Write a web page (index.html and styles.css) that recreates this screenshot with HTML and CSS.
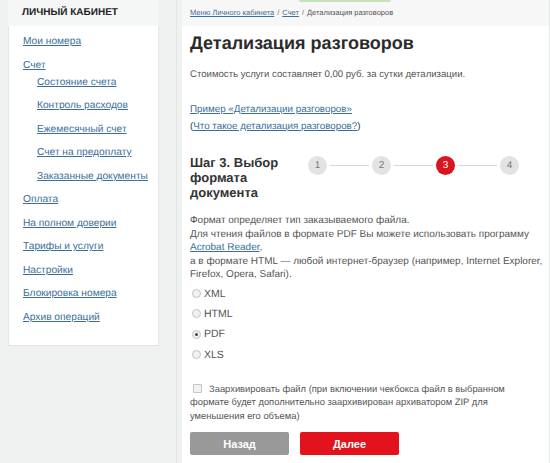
FILE: index.html
```html
<!DOCTYPE html>
<html lang="ru">
<head>
<meta charset="utf-8">
<link rel="stylesheet" href="styles.css">
</head>
<body>
<div class="page">
  <aside class="side">
    <div class="card">
      <div class="card-head">ЛИЧНЫЙ КАБИНЕТ</div>
      <ul class="menu">
        <li><a href="#">Мои номера</a></li>
        <li class="group"><a href="#">Счет</a>
          <ul class="sub">
            <li><a href="#">Состояние счета</a></li>
            <li><a href="#">Контроль расходов</a></li>
            <li><a href="#">Ежемесячный счет</a></li>
            <li><a href="#">Счет на предоплату</a></li>
            <li><a href="#">Заказанные документы</a></li>
          </ul>
        </li>
        <li><a href="#">Оплата</a></li>
        <li><a href="#">На полном доверии</a></li>
        <li><a href="#">Тарифы и услуги</a></li>
        <li><a href="#">Настройки</a></li>
        <li><a href="#">Блокировка номера</a></li>
        <li><a href="#">Архив операций</a></li>
      </ul>
    </div>
  </aside>
  <main class="main">
    <div class="crumbs">
      <span class="tab"></span>
      <a href="#">Меню Личного кабинета</a><span class="sep">/</span><a href="#">Счет</a><span class="sep">/</span><span>Детализация разговоров</span>
    </div>
    <div class="content">
      <h1 class="title">Детализация разговоров</h1>
      <p class="cost">Стоимость услуги составляет 0,00 руб. за сутки детализации.</p>
      <div class="links">
        <a href="#">Пример «Детализации разговоров»</a><br>
        (<a href="#">Что такое детализация разговоров?</a>)
      </div>
      <div class="step-row">
        <div class="step-title">Шаг 3. Выбор формата документа</div>
        <div class="steps">
          <span class="dot">1</span><span class="line"></span>
          <span class="dot">2</span><span class="line"></span>
          <span class="dot active">3</span><span class="line"></span>
          <span class="dot">4</span>
        </div>
      </div>
      <p class="desc">Формат определяет тип заказываемого файла.<br>
        Для чтения файлов в формате PDF Вы можете использовать программу<br>
        <a href="#">Acrobat Reader</a>,<br>
        а в формате HTML — любой интернет-браузер (например, Internet Explorer,<br>
        Firefox, Opera, Safari).</p>
      <div class="radios">
        <label class="radio"><span class="rb"></span>XML</label>
        <label class="radio"><span class="rb"></span>HTML</label>
        <label class="radio"><span class="rb on"></span>PDF</label>
        <label class="radio"><span class="rb"></span>XLS</label>
      </div>
      <p class="zip"><span class="cb"></span>Заархивировать файл (при включении чекбокса файл в выбранном формате будет дополнительно заархивирован архиватором ZIP для уменьшения его объема)</p>
      <div class="buttons">
        <button class="btn back">Назад</button>
        <button class="btn next">Далее</button>
      </div>
    </div>
  </main>
</div>
</body>
</html>
```
FILE: styles.css
```css
* { box-sizing: border-box; }
html, body { margin: 0; padding: 0; }
body {
  background: #f0f2f2;
  font-family: "Liberation Sans", Arial, sans-serif;
  color: #555;
  width: 550px;
  height: 463px;
  overflow: hidden;
  text-rendering: geometricPrecision;
}
a { color: #3a6f99; text-decoration: underline; }
.page { display: flex; height: 463px; }
.side {
  width: 177px;
  flex: none;
  background: #eff1f1;
  border-right: 1px solid #e3e6e6;
  padding-left: 8px;
}
.card { width: 151px; }
.card-head {
  height: 26px;
  background: #f5f6f6;
  padding: 7px 0 0 14px;
  font-size: 10px;
  font-weight: bold;
  color: #222;
}
.menu {
  list-style: none;
  margin: 0;
  padding: 9px 0 21px 14px;
  background: #fff;
  border: 1px solid #e4e6e6;
  border-top: none;
  font-size: 10.2px;
}
.menu li { line-height: 13px; margin-bottom: 10.5px; }
.menu li:last-child { margin-bottom: 0; }
.sub { list-style: none; margin: 4px 0 0 0; padding: 0 0 0 14px; }
.sub li { margin-bottom: 10.5px; }
.sub li:last-child { margin-bottom: 0; }
.group { margin-bottom: 10.5px; }

.main { flex: 1; background: #fff; border-right: 1px solid #e6e8e8; margin-left: 5px; }
.crumbs {
  position: relative;
  height: 26px;
  background: #f7f7f7;
  padding: 8px 0 0 8px;
  font-size: 7.5px;
  color: #555;
}
.crumbs .tab {
  position: absolute;
  left: 117px;
  top: 0;
  width: 92px;
  height: 2px;
  background: #c5e2bb;
  border-radius: 0 0 3px 3px;
}
.crumbs .sep { margin: 0 3px; color: #777; }
.content { padding: 6px 0 0 8px; }
.title {
  margin: 0;
  font-size: 18px;
  font-weight: bold;
  color: #2b2b2b;
  line-height: 22px;
}
.cost { margin: 14px 0 0; font-size: 9.6px; line-height: 13px; }
.links { margin-top: 20px; font-size: 9.8px; line-height: 17px; color: #333; }
.step-row { display: flex; margin-top: 20px; }
.step-title {
  width: 112px;
  font-size: 13px;
  font-weight: bold;
  color: #333;
  line-height: 15px;
}
.steps { display: flex; align-items: center; height: 20px; margin-left: 6px; margin-top: 0; }
.dot {
  width: 19px; height: 19px; border-radius: 50%;
  background: #e3e3e3; color: #777;
  font-size: 10px; display: flex; align-items: center; justify-content: center;
}
.dot.active { background: #d8161f; color: #fff; }
.line { width: 39px; height: 1px; background: #d6d6d6; margin: 0 3px; }
.desc { margin: 14px 0 0; font-size: 10px; line-height: 13.5px; }
.radios { margin-top: 2px; }
.radio { display: flex; align-items: center; height: 20.3px; font-size: 10.5px; color: #555; }
.rb {
  width: 9px; height: 9px; border-radius: 50%;
  border: 1px solid #c4c4c4; background: #f1f1f1;
  margin: 0 3px 0 2px; position: relative;
}
.rb.on::after {
  content: ""; position: absolute; left: 2px; top: 2px;
  width: 3px; height: 3px; border-radius: 50%; background: #444;
}
.zip { margin: 17px 0 0; font-size: 9.4px; line-height: 13.5px; width: 318px; }
.cb {
  display: inline-block; width: 9px; height: 9px;
  border: 1px solid #c6c6c6; background: #f2f2f2; border-radius: 1px;
  margin: 0 7px 0 3px; vertical-align: -1px;
}
.buttons { display: flex; gap: 11px; margin-top: 10px; }
.btn {
  width: 99px; height: 23px; border: none; border-radius: 2px;
  color: #fff; font-family: "Liberation Sans", Arial, sans-serif;
  font-size: 11px; font-weight: bold;
}
.btn.back { background: #999; }
.btn.next { background: #e2131d; }
```
